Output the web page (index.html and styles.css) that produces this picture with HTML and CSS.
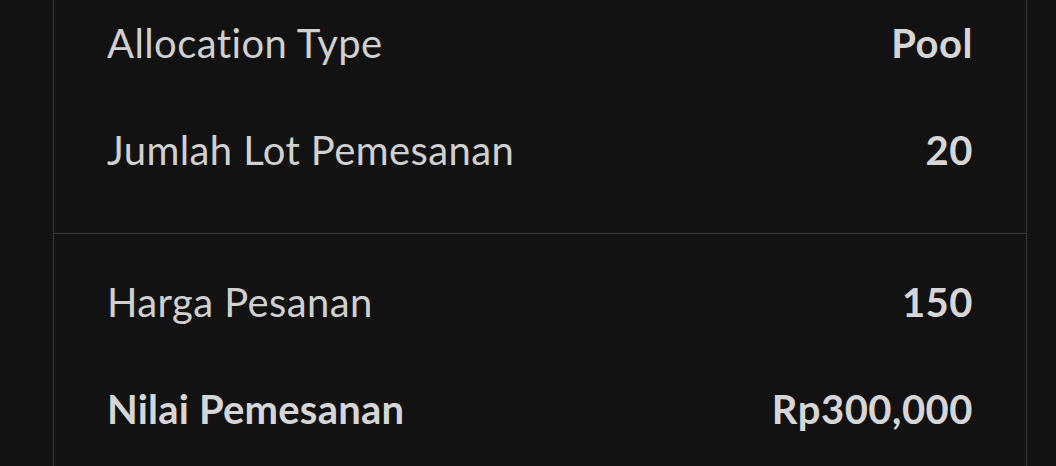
FILE: index.html
```html
<!DOCTYPE html>
<html>
<head>
<meta charset="utf-8">
<link rel="stylesheet" href="styles.css">
</head>
<body>
<div class="card">
  <div class="section top">
    <div class="row"><span class="label">Allocation Type</span><span class="value">Pool</span></div>
    <div class="row"><span class="label">Jumlah Lot Pemesanan</span><span class="value">20</span></div>
  </div>
  <div class="section bottom">
    <div class="row"><span class="label">Harga Pesanan</span><span class="value">150</span></div>
    <div class="row strong"><span class="label">Nilai Pemesanan</span><span class="value">Rp300,000</span></div>
  </div>
</div>
</body>
</html>
```
FILE: styles.css
```css
html, body {
  margin: 0;
  padding: 0;
  background: #121212;
  height: 100%;
  overflow: hidden;
}
body {
  font-family: "Lato", "Liberation Sans", sans-serif;
  color: #d0d0d0;
  font-variant-ligatures: none;
}
.card {
  box-sizing: border-box;
  margin: -11px 29px 0 53px;
  border-left: 1px solid #3a3a3a;
  border-right: 1px solid #3a3a3a;
  height: calc(100% + 11px);
}
.section {
  padding: 0 53px;
}
.section.top {
  padding-bottom: 30px;
  border-bottom: 1px solid #3a3a3a;
}
.section.bottom {
  padding-top: 14px;
}
.row {
  height: 107px;
  display: flex;
  align-items: center;
  justify-content: space-between;
  font-size: 40px;
}
.label {
  font-weight: 400;
  letter-spacing: 0.4px;
}
.value {
  font-weight: 700;
  color: #d6d6d6;
  letter-spacing: 0.5px;
}
.row.strong .label {
  font-weight: 700;
  color: #d6d6d6;
  letter-spacing: 0.2px;
}
```
